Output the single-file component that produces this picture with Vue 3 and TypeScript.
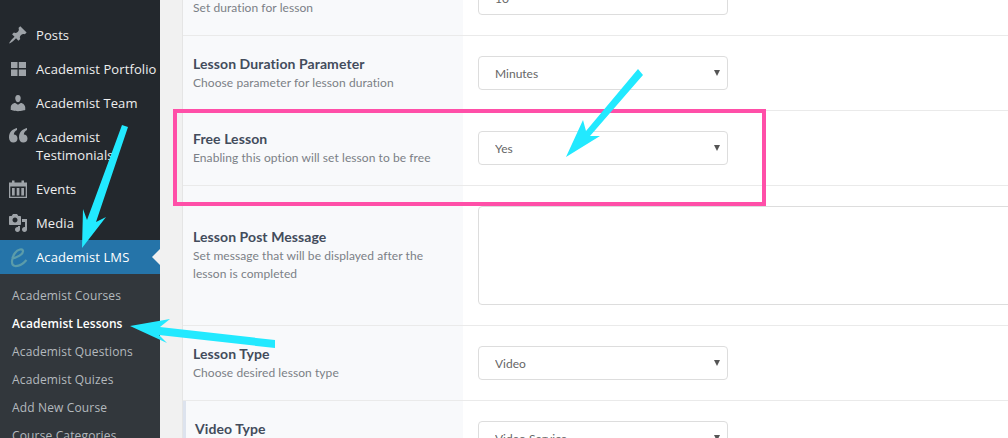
<script setup lang="ts">
interface MenuItem {
  label: string;
  paths: string[];
}

interface FieldRow {
  title: string;
  desc: string;
  kind: 'input' | 'select' | 'textarea';
  value?: string;
  accent?: boolean;
}

const menuItems: MenuItem[] = [
  {
    label: 'Posts',
    paths: ['M10.44 3.02l1.82-1.82 6.36 6.35-1.83 1.82c-1.05-.68-2.48-.57-3.41.36l-.75.75c-.92.93-1.04 2.35-.35 3.41l-1.83 1.82-2.41-2.41-2.8 2.79c-.42.42-3.38 2.71-3.8 2.29s1.86-3.39 2.28-3.81l2.79-2.79L4.1 9.36l1.83-1.82c1.05.69 2.48.57 3.41-.36l.75-.75c.93-.92 1.04-2.35.35-3.41z'],
  },
  {
    label: 'Academist Portfolio',
    paths: ['M3 3h6.5v6H3zM10.8 3H18v6h-7.2zM3 10.5h6.5V17H3zM10.8 10.5H18V17h-7.2z'],
  },
  {
    label: 'Academist Team',
    paths: ['M10 9.25c-2.27 0-2.73-3.44-2.73-3.44C7 4.02 7.82 2 9.97 2c2.16 0 2.98 2.02 2.71 3.81 0 0-.41 3.44-2.68 3.44zm0 2.57L12.72 10c2.39 0 4.52 2.33 4.52 4.53v2.49s-3.65 1.13-7.24 1.13c-3.65 0-7.24-1.13-7.24-1.13v-2.49c0-2.25 1.94-4.48 4.47-4.48z'],
  },
  {
    label: 'Academist Testimonials',
    paths: [
      'M9 -8C4.500 -7 1 -4 1 1.500c0 3 1.800 5 4.300 5s4.200-1.700 4.200-4.100S7.800 -1.500 5.800 -1.500C6 -3.500 7.300 -5.200 9 -6z',
      'M19 -8C14.500 -7 11 -4 11 1.500c0 3 1.800 5 4.300 5s4.200-1.700 4.200-4.100S17.800 -1.500 15.800 -1.500C16 -3.500 17.300 -5.200 19 -6z',
    ],
  },
  {
    label: 'Events',
    paths: ['M4 1.500h2.500V3.500h7V1.500H16V3.500h3V19H1V3.500h3zM2.300 7.500v10.200h15.400V7.500zM4 9h2.700v7.500H4zM8.700 9h2.700v7.500H8.700zM13.300 9H16v7.500h-2.700z'],
  },
  {
    label: 'Media',
    paths: ['M13 11V4c0-.55-.45-1-1-1h-1.67L9 1H5L3.67 3H2c-.55 0-1 .45-1 1v7c0 .55.45 1 1 1h10c.55 0 1-.45 1-1zM7 4.500c1.380 0 2.500 1.120 2.500 2.500S8.380 9.500 7 9.500 4.500 8.380 4.500 7 5.620 4.500 7 4.500zM14 6h5v10.500c0 1.380-1.120 2.500-2.500 2.500S14 17.880 14 16.500s1.120-2.500 2.500-2.500c.17 0 .34.02.5.05V9h-3V6zm-4 8.050V13h2v3.500c0 1.380-1.120 2.500-2.500 2.500S7 17.880 7 16.500 8.120 14 9.500 14c.17 0 .34.02.5.05z'],
  },
]

const subItems = [
  'Academist Courses',
  'Academist Lessons',
  'Academist Questions',
  'Academist Quizes',
  'Add New Course',
  'Course Categories',
]

const rows: FieldRow[] = [
  { title: 'Lesson Duration', desc: 'Set duration for lesson', kind: 'input', value: '10' },
  { title: 'Lesson Duration Parameter', desc: 'Choose parameter for lesson duration', kind: 'select', value: 'Minutes' },
  { title: 'Free Lesson', desc: 'Enabling this option will set lesson to be free', kind: 'select', value: 'Yes' },
  { title: 'Lesson Post Message', desc: 'Set message that will be displayed after the lesson is completed', kind: 'textarea' },
  { title: 'Lesson Type', desc: 'Choose desired lesson type', kind: 'select', value: 'Video' },
  { title: 'Video Type', desc: 'Choose video type', kind: 'select', value: 'Video Service', accent: true },
]
</script>

<template>
  <div class="page">
    <aside class="sidebar">
      <ul class="menu">
        <li v-for="item in menuItems" :key="item.label" class="menu__item">
          <svg class="menu__icon" viewBox="0 0 20 20" width="20" height="20">
            <path v-for="d in item.paths" :key="d" :d="d" />
          </svg>
          <span class="menu__label">{{ item.label }}</span>
        </li>
        <li class="menu__item menu__item--current">
          <svg class="menu__icon" viewBox="0 0 20 20" width="20" height="20">
            <path class="menu__logo" d="M3.500 11.500C9 11 15.500 7 15 3.800C14.500 1.500 10 2 7 6C3.500 10.500 2.500 18.500 7 19C10.500 19.300 15 17 18.500 13" />
          </svg>
          <span class="menu__label">Academist LMS</span>
        </li>
      </ul>
      <ul class="submenu">
        <li
          v-for="sub in subItems"
          :key="sub"
          class="submenu__item"
          :class="{ 'submenu__item--active': sub === 'Academist Lessons' }"
        >
          {{ sub }}
        </li>
      </ul>
    </aside>

    <main class="content">
      <section class="form">
        <div
          v-for="row in rows"
          :key="row.title"
          class="row"
          :class="{ 'row--tall': row.kind === 'textarea', 'row--accent': row.accent }"
        >
          <div class="row__label">
            <h4 class="row__title">{{ row.title }}</h4>
            <p class="row__desc">{{ row.desc }}</p>
          </div>
          <div class="row__field">
            <input v-if="row.kind === 'input'" class="control" type="text" :value="row.value" />
            <textarea v-else-if="row.kind === 'textarea'" class="control control--area"></textarea>
            <div v-else class="select">
              <select class="control">
                <option>{{ row.value }}</option>
              </select>
            </div>
          </div>
        </div>
      </section>
    </main>

    <div class="highlight"></div>
    <svg class="arrows" viewBox="0 0 1008 438" width="1008" height="438">
      <polygon points="122,125 128,127 96,222 106,217 82,248 83,209 87,220" />
      <polygon points="275,340 275,348 159,335 167,343 130,326 170,319 160,327" />
      <polygon points="638,69 643,75 590,136 600,136 566,157 583,120 586,131" />
    </svg>
  </div>
</template>

<style>
html,
body {
  margin: 0;
  background: #f1f1f1;
  overflow: hidden;
}
</style>

<style scoped>
.page {
  position: relative;
  display: flex;
  width: 1008px;
  height: 438px;
  overflow: hidden;
  background: #f1f1f1;
  font-family: "Open Sans", "Liberation Sans", sans-serif;
}

.sidebar {
  flex: 0 0 160px;
  padding-top: 18px;
  background: #23282d;
}

.menu,
.submenu {
  margin: 0;
  padding: 0;
  list-style: none;
}

.menu__item {
  position: relative;
  display: flex;
  align-items: center;
  min-height: 34px;
  padding-left: 8px;
  box-sizing: border-box;
  color: #eee;
  font-size: 13px;
  letter-spacing: 0.1px;
  line-height: 18px;
}

.menu__item:nth-child(4) {
  width: 128px;
  min-height: 52px;
}

.menu__icon {
  flex: 0 0 20px;
  margin-right: 8px;
  overflow: visible;
  fill: #9ea3a8;
}

.menu__logo {
  fill: none;
  stroke: #5b9caa;
  stroke-width: 2.2;
}

.menu__item--current {
  background: #2574a9;
  color: #fff;
}

.menu__item--current::after {
  content: "";
  position: absolute;
  right: 0;
  top: 9px;
  border: 8px solid transparent;
  border-right-color: #f1f1f1;
  border-left: 0;
}

.submenu {
  padding: 8px 0 6px;
  background: #32373c;
}

.submenu__item {
  height: 28px;
  padding-left: 12px;
  color: #b4b9be;
  font-size: 12px;
  letter-spacing: 0.15px;
  line-height: 28px;
}

.submenu__item--active {
  color: #fff;
  font-weight: 600;
  letter-spacing: 0.05px;
}

.content {
  flex: 1;
  min-width: 0;
  padding-left: 22px;
}

.form {
  margin-top: -39px;
  border-left: 1px solid #e5e5e5;
  background: #fff;
  font-family: Lato, "Open Sans", sans-serif;
}

.row {
  display: flex;
  height: 75px;
  box-sizing: border-box;
  border-bottom: 1px solid #eaeaea;
}

.row--tall {
  height: 140px;
}

.row__label {
  display: flex;
  flex: 0 0 280px;
  flex-direction: column;
  justify-content: center;
  box-sizing: border-box;
  padding: 0 30px 0 10px;
  background: #f8f9fb;
}

.row--tall .row__label {
  padding-bottom: 1px;
}

.row--accent .row__label {
  border-left: 3px solid #dde3ee;
  padding-left: 9px;
}

.row__title {
  margin: 0;
  color: #434c5c;
  font-size: 14px;
  font-weight: 700;
  letter-spacing: 0.08px;
  line-height: 20px;
}

.row__desc {
  margin: 0;
  color: #7b7f86;
  font-size: 12px;
  letter-spacing: 0.07px;
  line-height: 18px;
}

.row__field {
  flex: none;
  padding: 20px 0 0 15px;
}

.control {
  display: block;
  width: 250px;
  height: 34px;
  box-sizing: border-box;
  padding: 0 16px;
  border: 1px solid #ddd;
  border-radius: 4px;
  outline: none;
  background: #fff;
  appearance: none;
  color: #666;
  font-family: inherit;
  font-size: 12px;
}

.control--area {
  width: 620px;
  height: 99px;
  resize: none;
}

.select {
  position: relative;
}

.select::after {
  content: "";
  position: absolute;
  top: 14px;
  right: 8px;
  border-top: 6px solid #555;
  border-right: 3px solid transparent;
  border-left: 3px solid transparent;
}

.highlight {
  position: absolute;
  top: 109px;
  left: 173px;
  width: 593px;
  height: 97px;
  box-sizing: border-box;
  border: 4px solid #ff4fa8;
}

.arrows {
  position: absolute;
  top: 0;
  left: 0;
  fill: #22e9ff;
}
</style>
